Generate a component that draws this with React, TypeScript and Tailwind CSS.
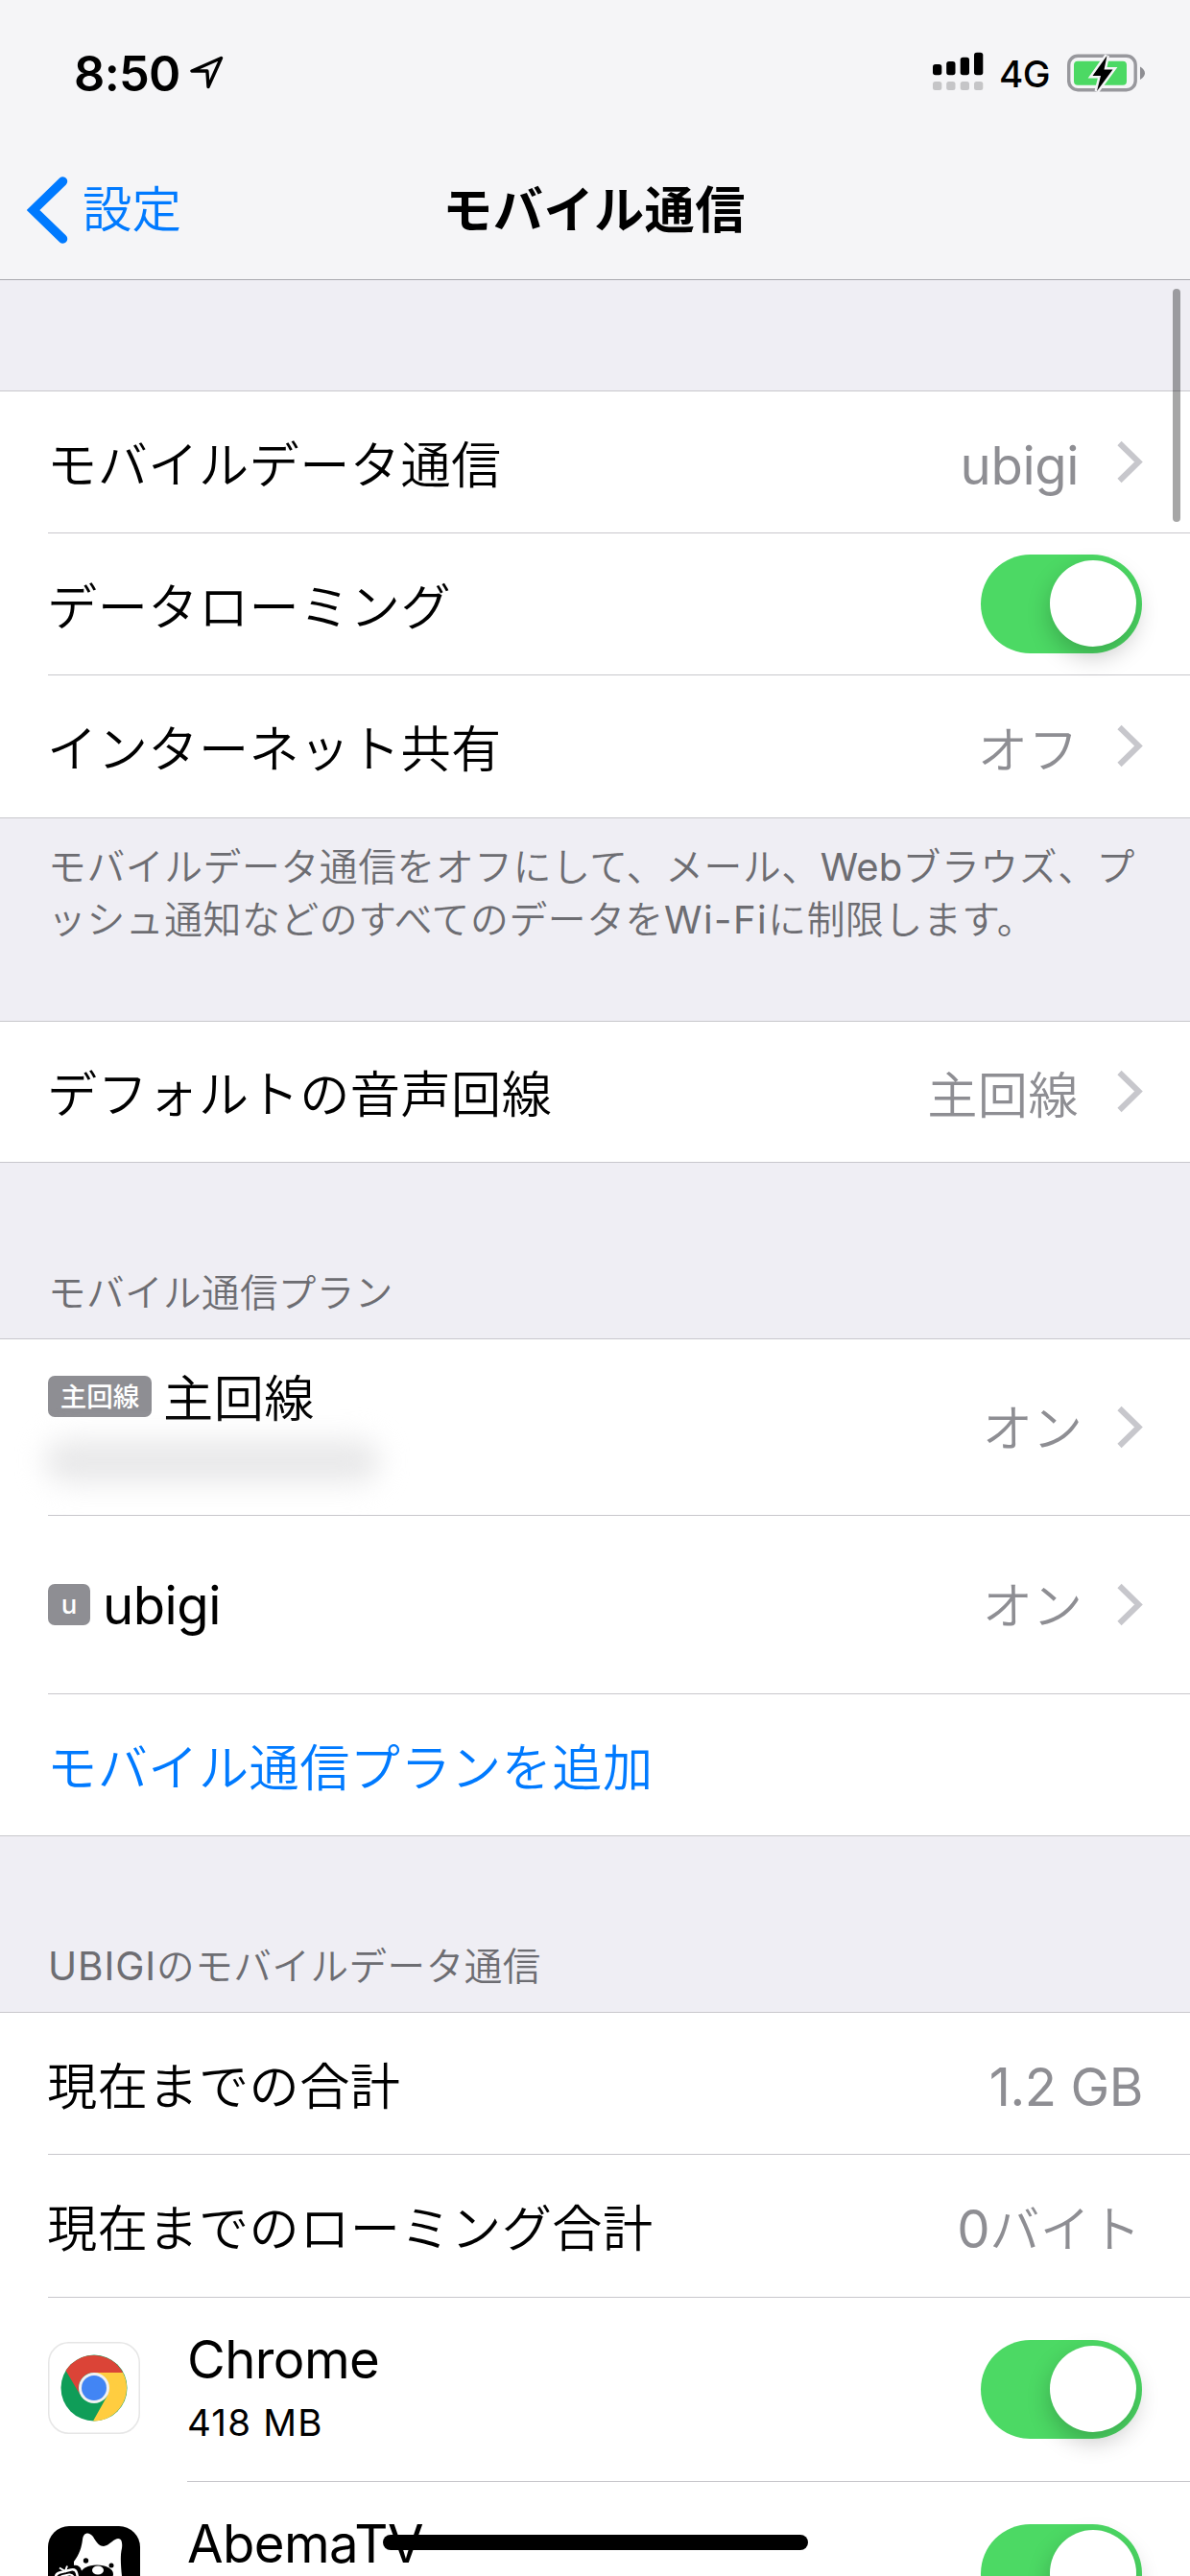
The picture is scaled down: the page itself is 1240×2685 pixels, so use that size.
import React from "react";

const JA = "font-['Noto_Sans_CJK_JP',sans-serif]";
const LATIN = "font-['Inter','Noto_Sans_CJK_JP',sans-serif]";

function Chevron() {
  return (
    <svg className="ml-[39px] h-[46px] w-[28px] shrink-0" viewBox="0 0 28 46" fill="none">
      <path d="M3.5 3 L23.500 22.500 L3.5 42" stroke="#c7c7cc" strokeWidth="6" />
    </svg>
  );
}

function Toggle() {
  return (
    <div className="mr-px mb-[1px] flex h-[103px] w-[168px] shrink-0 items-center justify-end rounded-full bg-[#4cd964] pr-[6px]">
      <div className="size-[90px] rounded-full bg-white shadow-[0_10px_24px_rgba(0,0,0,0.22)]" />
    </div>
  );
}

function Label({ children, blue }: { children: React.ReactNode; blue?: boolean }) {
  return (
    <span
      className={`${JA} -ml-px pb-[2px] text-[52.2px] leading-[64px] font-[350] tracking-[0.45px] whitespace-nowrap ${
        blue ? "text-[#007aff]" : "text-black"
      }`}
    >
      {children}
    </span>
  );
}

function Value({ children }: { children: React.ReactNode }) {
  return (
    <span className={`${JA} text-[52.2px] leading-[64px] font-[350] tracking-[0.4px] whitespace-nowrap text-[#8e8e93]`}>
      {children}
    </span>
  );
}

function PlanState({ children }: { children: React.ReactNode }) {
  return (
    <span className={`${JA} -mr-[4px] pb-[5px] text-[52.2px] leading-[64px] font-[350] whitespace-nowrap text-[#8e8e93]`}>
      {children}
    </span>
  );
}

function LatinValue({ children }: { children: React.ReactNode }) {
  return (
    <span className={`${LATIN} pt-[6px] text-[54.5px] leading-[64px] tracking-[-0.4px] whitespace-nowrap text-[#8e8e93]`}>
      {children}
    </span>
  );
}

function Row({ height, last, children }: { height: string; last?: boolean; children: React.ReactNode }) {
  return (
    <div className={`ml-[50px] flex items-center justify-between pr-[49px] ${height} ${last ? "" : "border-b border-[#c8c7cc]"}`}>
      {children}
    </div>
  );
}

function Group({ children }: { children: React.ReactNode }) {
  return <section className="border-y border-[#c8c7cc] bg-white">{children}</section>;
}

function Badge({ children, latin }: { children: React.ReactNode; latin?: boolean }) {
  return (
    <span
      className={`flex h-[43px] items-center justify-center rounded-[7px] bg-[#8e8e93] text-[27.5px] leading-none text-white ${
        latin ? `${LATIN} w-[44px] font-medium` : `${JA} w-[108px] font-medium`
      }`}
    >
      {children}
    </span>
  );
}

function ChromeIcon() {
  return (
    <svg className="mb-[4px] size-[96px] shrink-0" viewBox="0 0 96 96">
      <rect x="0.75" y="0.75" width="94.5" height="94.5" rx="21" fill="#fff" stroke="#e6e6e6" strokeWidth="1.5" />
      <circle cx="48" cy="48" r="34.500" fill="#0f9d58" />
      <path d="M78.1 32 A34.5 34.5 0 0 1 47 82.5 L61.9 56 L48 32 Z" fill="#ffcd40" />
      <path d="M18.6 30 A34.5 34.5 0 0 1 78.1 32 L48 32 A16 16 0 0 0 34 56 Z" fill="#db4437" />
      <circle cx="48" cy="48" r="16" fill="#f1f1f1" />
      <circle cx="48" cy="48" r="13" fill="#4285f4" />
    </svg>
  );
}

function AbemaIcon() {
  return (
    <svg className="mb-[4px] size-[96px] shrink-0" viewBox="0 0 96 96">
      <rect width="96" height="96" rx="22" fill="#000" />
      <path
        d="M27 37 C33 29 35 22 36 14 C37 6 43 6 47 11 C51 18 54 21 58 21 C63 20 65 17 70 14 C76 11 78 16 77 23 C75 31 76 42 77 52 L77 96 L27 96 Z"
        fill="#fff"
      />
      <circle cx="39.500" cy="36" r="2.700" fill="#000" />
      <circle cx="66" cy="41" r="2.500" fill="#000" />
      <ellipse cx="51" cy="50" rx="17" ry="9.500" fill="#000" />
      <ellipse cx="52" cy="46" rx="6" ry="4.500" fill="#fff" />
      <path d="M8 53 Q7 49 11 48 L26 44 Q31 43 32 47 L36 62 L8 66 Z" fill="#000" stroke="#000" strokeWidth="6" />
      <path d="M8 56 Q7 50 12 48.500 L24 45.500 Q29 44.500 30 49 L33 62" fill="none" stroke="#fff" strokeWidth="2.500" />
      <path d="M12 56 Q12 53 15 52 L22 50.500 Q26 50 27 54" fill="none" stroke="#fff" strokeWidth="2" />
      <path d="M12 43.500 L18 47 L20 41.500" fill="none" stroke="#fff" strokeWidth="2" />
    </svg>
  );
}

function AppRow({ icon, name, usage }: { icon: React.ReactNode; name: string; usage: string }) {
  return (
    <div className="ml-[50px] flex h-[192px] shrink-0">
      <div className="flex w-[145px] items-center">{icon}</div>
      <div className="flex flex-1 items-center justify-between border-b border-[#c8c7cc] pr-[49px]">
        <div className={`${LATIN} flex h-full flex-col pt-[32px]`}>
          <span className="text-[54.5px] leading-[64px] tracking-[-0.6px]">{name}</span>
          <span className="mt-[10px] text-[38.5px] leading-[48px] tracking-[1.2px]">{usage}</span>
        </div>
        <Toggle />
      </div>
    </div>
  );
}

function StatusBar() {
  return (
    <div className="flex h-[147px] items-start justify-between pr-[46px] pl-[77px]">
      <div className="flex pt-[47px]">
        <span className={`${LATIN} w-[121px] text-[50.5px] leading-[60px] font-semibold tracking-[-0.7px]`}>8:50</span>
        <svg className="mt-[11px] h-[36px] w-[36px]" viewBox="0 0 36 36" fill="none">
          <path d="M32.500 2.500 L2 16 L17.900 16 L19 32.500 Z" stroke="#000" strokeWidth="3.400" strokeLinejoin="round" />
        </svg>
      </div>
      <div className="flex pt-[54px]">
        <svg className="h-[42px] w-[53px]" viewBox="0 0 53 42">
          <rect x="0" y="13" width="9.300" height="11.300" rx="2.800" />
          <rect x="14.200" y="10" width="9.300" height="14.300" rx="2.800" />
          <rect x="28.700" y="5.700" width="9.300" height="18.600" rx="2.800" />
          <rect x="43" y="0.700" width="9.300" height="23.600" rx="2.800" />
          {[0, 14.2, 28.7, 43].map((x) => (
            <rect key={x} x={x} y="31" width="9.300" height="9" rx="2.500" fill="#c5c5c7" />
          ))}
        </svg>
        <span className={`${LATIN} -mt-px ml-[16px] w-[71px] text-[38.500px] leading-[48px] font-medium tracking-[-0.6px]`}>4G</span>
        <svg className="h-[46px] w-[82px]" viewBox="0 0 82 46">
          <rect x="1.700" y="4.200" width="69.500" height="35.500" rx="9.500" fill="none" stroke="#98989d" strokeWidth="3.400" />
          <rect x="7" y="9.700" width="55" height="25" rx="4" fill="#4cd964" />
          <path d="M76 15.500 Q81 18.500 81 22.300 Q81 26 76 29 Z" fill="#8e8e93" />
          <path
            d="M41.500 4 L26.500 25 L35 25 L31 41 L47.500 18.500 L38.500 18.500 Z"
            fill="#000"
            stroke="#f5f5f7"
            strokeWidth="5"
            paintOrder="stroke"
          />
        </svg>
      </div>
    </div>
  );
}

export default function App() {
  return (
    <div className="relative flex h-[2685px] w-[1240px] flex-col overflow-hidden bg-[#efeef4] text-black">
      <header className="h-[292px] shrink-0 border-b border-[#a9a9ae] bg-[#f5f5f7]">
        <StatusBar />
        <div className="grid h-[144px] grid-cols-3 items-center px-[28px]">
          <div className="flex items-center">
            <svg className="h-[72px] w-[44px]" viewBox="0 0 44 72" fill="none">
              <path d="M37.500 6 L6.500 36 L37.500 66" stroke="#007aff" strokeWidth="9.500" strokeLinecap="round" strokeLinejoin="miter" />
            </svg>
            <span className={`${JA} ml-[14px] pb-[8px] text-[51.500px] leading-[64px] font-[350] text-[#007aff]`}>設定</span>
          </div>
          <h1 className={`${JA} -ml-[2px] pb-[8px] text-center text-[52.200px] leading-[64px] font-bold tracking-[0.4px] whitespace-nowrap`}>
            モバイル通信
          </h1>
        </div>
      </header>

      <div className="h-[115px] shrink-0" />
      <Group>
        <Row height="h-[148px]">
          <Label>モバイルデータ通信</Label>
          <div className="flex items-center">
            <LatinValue>ubigi</LatinValue>
            <Chevron />
          </div>
        </Row>
        <Row height="h-[148px]">
          <Label>データローミング</Label>
          <Toggle />
        </Row>
        <Row height="h-[148px]" last>
          <Label>インターネット共有</Label>
          <div className="flex items-center">
            <Value>オフ</Value>
            <Chevron />
          </div>
        </Row>
      </Group>

      <p
        className={`${JA} h-[211px] shrink-0 pt-[22px] pl-[50px] text-[39.800px] leading-[52px] font-[350] tracking-[0.600px] whitespace-nowrap text-[#6d6d72]`}
      >
        モバイルデータ通信をオフにして、メール、
        <span className="font-['Inter'] text-[40px] font-normal tracking-[0.200px]">Web</span>
        ブラウズ、プ
        <br />
        ッシュ通知などのすべてのデータを
        <span className="font-['Inter'] text-[40px] font-normal tracking-[1.500px]">Wi-Fi</span>
        に制限します。
      </p>

      <Group>
        <Row height="h-[146px]" last>
          <Label>デフォルトの音声回線</Label>
          <div className="flex items-center">
            <Value>主回線</Value>
            <Chevron />
          </div>
        </Row>
      </Group>

      <h2 className={`${JA} h-[183px] shrink-0 pt-[107px] pl-[50px] text-[39.600px] leading-[52px] font-[350] tracking-[0.400px] text-[#6d6d72]`}>
        モバイル通信プラン
      </h2>

      <Group>
        <Row height="h-[184px]">
          <div className="flex h-full flex-col pt-[26px]">
            <div className="flex items-center gap-[13px]">
              <Badge>主回線</Badge>
              <Label>主回線</Label>
            </div>
            <div className="mt-[12px] -ml-[4px] h-[46px] w-[350px] rounded-full bg-[#e9e9ea] blur-[14px]" />
          </div>
          <div className="flex items-center">
            <PlanState>オン</PlanState>
            <Chevron />
          </div>
        </Row>
        <Row height="h-[186px]">
          <div className="flex items-center gap-[13px]">
            <Badge latin>u</Badge>
            <span className={`${LATIN} text-[54.500px] leading-[64px] tracking-[-0.500px]`}>ubigi</span>
          </div>
          <div className="flex items-center">
            <PlanState>オン</PlanState>
            <Chevron />
          </div>
        </Row>
        <Row height="h-[147px]" last>
          <Label blue>モバイル通信プランを追加</Label>
        </Row>
      </Group>

      <h2 className={`${JA} h-[183px] shrink-0 pt-[107px] pl-[50px] text-[39.600px] leading-[52px] font-[350] tracking-[0.500px] text-[#6d6d72]`}>
        <span className="font-['Inter'] text-[40.500px] font-normal tracking-[0.900px]">UBIGI</span>のモバイルデータ通信
      </h2>

      <section className="border-t border-[#c8c7cc] bg-white">
        <Row height="h-[148px]">
          <Label>現在までの合計</Label>
          <LatinValue>1.2 GB</LatinValue>
        </Row>
        <Row height="h-[149px]">
          <Label>現在までのローミング合計</Label>
          <span className="flex items-center pr-[2px]">
            <LatinValue>0</LatinValue>
            <Value>バイト</Value>
          </span>
        </Row>
        <AppRow icon={<ChromeIcon />} name="Chrome" usage="418 MB" />
        <AppRow icon={<AbemaIcon />} name="AbemaTV" usage="" />
      </section>

      <div className="absolute top-[301px] left-[1222px] h-[243px] w-[8px] rounded-full bg-black/35" />
      <div className="absolute top-[2642px] left-[399px] h-[16px] w-[443px] rounded-full bg-black" />
    </div>
  );
}
